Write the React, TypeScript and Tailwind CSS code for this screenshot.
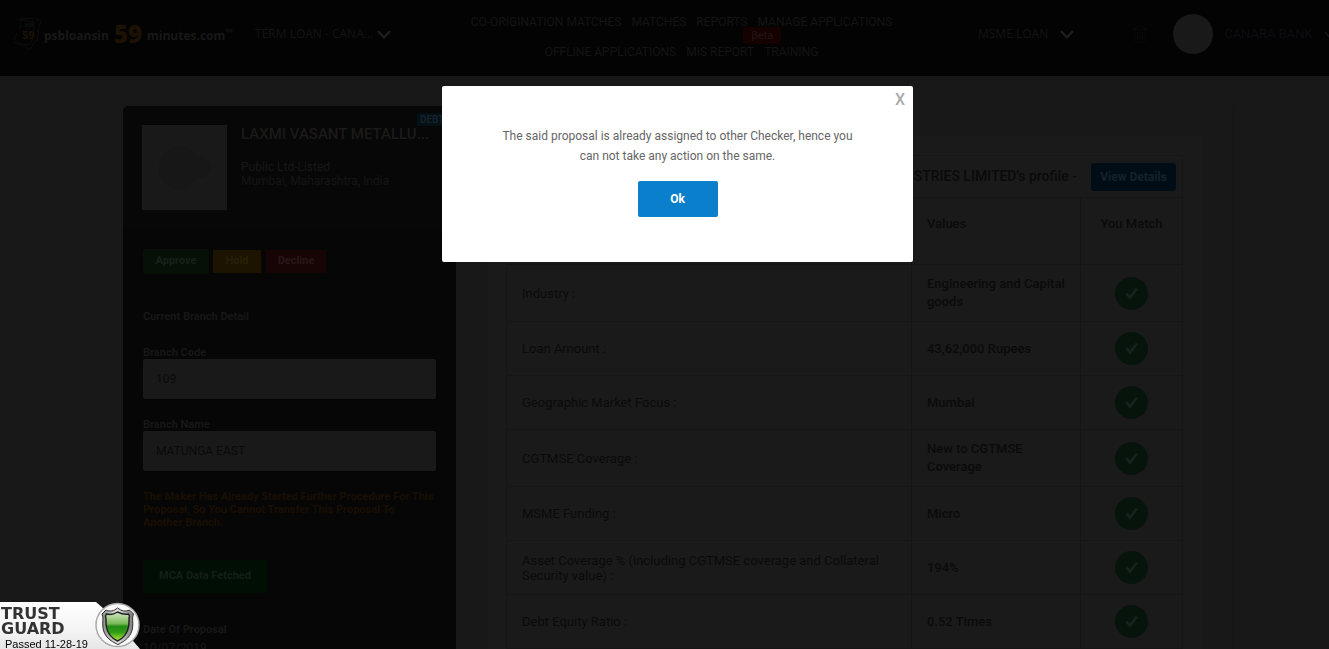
import React from 'react';

type Match = { label: string; value: string; height: string };

const matches: Match[] = [
  { label: 'Industry :', value: 'Engineering and Capital goods', height: 'h-[57px]' },
  { label: 'Loan Amount :', value: '43,62,000 Rupees', height: 'h-[54px]' },
  { label: 'Geographic Market Focus :', value: 'Mumbai', height: 'h-[54px]' },
  { label: 'CGTMSE Coverage :', value: 'New to CGTMSE Coverage', height: 'h-[57px]' },
  { label: 'MSME Funding :', value: 'Micro', height: 'h-[54px]' },
  {
    label: 'Asset Coverage % (including CGTMSE coverage and Collateral Security value) :',
    value: '194%',
    height: 'h-[54px]',
  },
  { label: 'Debt Equity Ratio :', value: '0.52 Times', height: 'h-[54px]' },
];

function Chevron() {
  return (
    <svg width="14" height="9" viewBox="0 0 14 9" fill="none" stroke="#202020" strokeWidth="2" className="shrink-0">
      <path d="M1 1l6 6.5L13 1" />
    </svg>
  );
}

function LogoMark() {
  return (
    <svg width="32" height="36" viewBox="0 0 32 36" fill="none" className="shrink-0">
      <g stroke="#0a0d0b" strokeWidth="1">
        <path d="M7 2h16l6 3-4 11M5 4l15-2 2 12" />
        <path d="M8 13l1-9 13 2v9" />
        <path d="M2 24l3-7M2 26l16 7 6-9M4 27l13 2 4-6" />
        <path d="M27 13l-2 12" />
      </g>
      <rect x="13" y="7" width="9" height="4" fill="#080b09" />
      <text x="10" y="23" fontSize="11" fontWeight="700" fontFamily="Open Sans, sans-serif" fill="#1b1004">59</text>
    </svg>
  );
}

function Header() {
  return (
    <header className="flex h-[76px] bg-[#030303] text-[12px] text-[#141414]">
      <div className="flex w-[442px] shrink-0 items-center pb-2 pl-3 font-['Open_Sans',sans-serif]">
        <LogoMark />
        <a href="#home" className="flex items-center pt-1 font-bold text-[#181818]">
          <span className="text-[12px]">psbloansin</span>
          <span className="px-[5px] pb-1 text-[24px] leading-6 font-extrabold text-[#1c1103]">59</span>
          <span className="text-[12px]">minutes.com</span>
          <span className="pb-2 text-[10px]">™</span>
        </a>
        <button className="ml-[22px] flex items-center gap-1 text-[12px]">
          TERM LOAN - CANA...
          <Chevron />
        </button>
      </div>
      <nav className="flex w-[479px] shrink-0 flex-col items-center pt-[7px] leading-[30px]">
        <div className="flex gap-[10px]">
          <a href="#co-origination">CO-ORIGINATION MATCHES</a>
          <a href="#matches">MATCHES</a>
          <a href="#reports">REPORTS</a>
          <a href="#manage">MANAGE APPLICATIONS</a>
        </div>
        <div className="flex gap-[10px]">
          <a href="#offline">OFFLINE APPLICATIONS</a>
          <a href="#mis" className="relative">
            MIS REPORT
            <span className="absolute -top-[10px] left-[57px] rounded-[3px] bg-[#160101] px-2 text-[11px] leading-[17px] text-[#221616]">
              βeta
            </span>
          </a>
          <a href="#training">TRAINING</a>
        </div>
      </nav>
      <div className="flex shrink-0 items-center pb-2 pl-[57px]">
        <button className="flex items-center gap-3 font-['Open_Sans',sans-serif]">
          MSME LOAN
          <Chevron />
        </button>
        <button aria-label="Notifications" className="ml-[59px]">
          <svg width="14" height="18" viewBox="0 0 14 18" fill="none" stroke="#090909">
            <path d="M1 5V4l4-2V1h4v1l4 2v1zM2 8h10v9H2zM4.500 10v5M7 10v5M9.500 10v5" />
          </svg>
        </button>
        <div className="ml-[26px] h-10 w-10 rounded-full bg-[#191919]" />
        <button className="ml-[11px] flex items-center gap-[11px] text-[13px] whitespace-nowrap text-[#0c0d11]">
          CANARA BANK
          <svg width="10" height="7" viewBox="0 0 10 7" fill="none" stroke="#141418" strokeWidth="1.500" className="shrink-0">
            <path d="M1 1l4 4.500L9 1" />
          </svg>
        </button>
      </div>
    </header>
  );
}

function Sidebar() {
  return (
    <aside className="w-[333px] shrink-0 rounded-tl-md bg-[#060606] text-[11px] font-bold text-[#171717]">
      <div className="relative flex h-[124px] gap-[14px] rounded-tl-md border-b border-[#060606] bg-[#070707] pt-[19px] pl-[19px]">
        <div className="flex h-[85px] w-[85px] shrink-0 items-center justify-center bg-[#191919]">
          <svg width="54" height="44" viewBox="0 0 54 44">
            <path d="M22 1C34 1 35 8 42 10c8 2 12 8 11 13s-7 9-15 10c-5 6-9 10-17 10C9 43 1 33 1 22S10 1 22 1z" fill="#171717" />
          </svg>
        </div>
        <div className="min-w-0">
          <h2 className="truncate text-[15px] leading-[18px] font-medium text-[#1b1a19]">LAXMI VASANT METALLU...</h2>
          <p className="pt-[17px] text-[12px] leading-[14px] font-normal">
            Public Ltd-Listed
            <br />
            <span className="text-[#151515]">Mumbai, Maharashtra, India</span>
          </p>
        </div>
        <span className="absolute top-[7px] right-0 w-[39px] bg-[#051016] px-[3px] text-[10px] leading-[13px] text-[#14222a]">
          DEBT
        </span>
      </div>
      <div className="flex flex-col px-5 pt-[19px]">
        <div className="flex items-center gap-1">
          <button className="h-[25px] w-[66px] rounded-xs bg-[#071007] text-[#182018]">Approve</button>
          <button className="h-[23px] w-12 bg-[#1d1400] text-[#272008]">Hold</button>
          <button className="ml-px h-[23px] w-[60px] bg-[#170505] text-[#271818]">Decline</button>
        </div>
        <h3 className="pt-[35px] leading-[16px]">Current Branch Detail</h3>
        <label htmlFor="branch-code" className="pt-[21px] leading-[13px]">Branch Code</label>
        <input
          id="branch-code"
          defaultValue="109"
          className="h-10 w-full rounded-xs bg-[#191919] px-[13px] text-[12px] font-normal text-[#0a0a0a]"
        />
        <label htmlFor="branch-name" className="pt-[19px] leading-[13px]">Branch Name</label>
        <input
          id="branch-name"
          defaultValue="MATUNGA EAST"
          className="h-10 w-full rounded-xs bg-[#191919] px-[13px] text-[12px] font-normal text-[#0a0a0a]"
        />
        <p className="pt-[19px] leading-[13px] text-[#1a0e03]">
          The Maker Has Already Started Further Procedure For This Proposal, So You Cannot Transfer This Proposal To
          Another Branch.
        </p>
        <button className="mt-[31px] h-[33px] self-start bg-[#000e04] px-4 text-[#151e17]">MCA Data Fetched</button>
        <h3 className="pt-[29px] leading-[16px]">Date Of Proposal</h3>
        <p className="pt-[2px] text-[12px] leading-[16px] font-normal">10/07/2019</p>
      </div>
    </aside>
  );
}

function MatchTable() {
  return (
    <table className="w-full table-fixed border-collapse border border-[#161616] text-[13px] text-[#0a0a0a]">
      <colgroup>
        <col />
        <col className="w-[169px]" />
        <col className="w-[102px]" />
      </colgroup>
      <thead>
        <tr className="h-[42px] border-b border-[#151515]">
          <th colSpan={3} className="font-medium">
            <div className="flex items-center justify-end gap-[14px] pr-[6px] text-[14px]">
              LAXMI VASANT METALLURGICAL INDUSTRIES LIMITED's profile -
              <button className="h-7 w-[85px] rounded-[3px] bg-[#000d17] text-[12px] font-bold text-[#172129]">
                View Details
              </button>
            </div>
          </th>
        </tr>
        <tr className="h-[67px] border-b border-[#151515] text-left">
          <th className="border-r border-[#151515] px-[15px] pb-[14px] font-medium">Parameters</th>
          <th className="border-r border-[#151515] px-[15px] pb-[14px] font-medium">Values</th>
          <th className="pb-[14px] text-center font-medium">You Match</th>
        </tr>
      </thead>
      <tbody>
        {matches.map((m) => (
          <tr key={m.label} className={`${m.height} border-b border-[#161616]`}>
            <td className="border-r border-[#151515] px-[15px] leading-[15px]">{m.label}</td>
            <td className="border-r border-[#151515] px-[15px] leading-[18px] font-medium">{m.value}</td>
            <td>
              <svg width="33" height="33" viewBox="0 0 33 33" className="mx-auto" role="img" aria-label="Matched">
                <circle cx="16.500" cy="16.500" r="16.500" fill="#07140c" />
                <path d="M11.500 16.500l3.500 4 7-9" fill="none" stroke="#18211c" strokeWidth="2.800" />
              </svg>
            </td>
          </tr>
        ))}
      </tbody>
    </table>
  );
}

function Dialog() {
  return (
    <div className="fixed inset-0 flex items-start justify-center pt-[86px] pl-[26px]">
      <div
        role="dialog"
        aria-modal="true"
        className="relative flex h-[176px] w-[471px] flex-col items-center rounded-[2px] bg-white px-[50px] pt-10 text-center"
      >
        <button aria-label="Close" className="absolute top-1 right-2 text-[16px] leading-5 font-medium text-[#aaaaaa]">
          X
        </button>
        <p className="text-[12px] leading-5 text-[#666666]">
          The said proposal is already assigned to other Checker, hence you can not take any action on the same.
        </p>
        <button className="mt-[15px] h-9 w-20 rounded-xs bg-[#0a80cc] text-[12px] font-bold text-white">Ok</button>
      </div>
    </div>
  );
}

function TrustBadge() {
  return (
    <a href="#trust-guard" className="fixed bottom-0 left-0 h-[47px] w-[140px] text-[#333333]">
      <svg width="140" height="47" viewBox="0 0 140 47" className="absolute inset-0">
        <defs>
          <linearGradient id="plate" x1="0" y1="0" x2="0" y2="1">
            <stop offset="0" stopColor="#ffffff" />
            <stop offset="0.600" stopColor="#f4f4f4" />
            <stop offset="1" stopColor="#e6e6e6" />
          </linearGradient>
          <linearGradient id="shield" x1="0" y1="0" x2="0" y2="1">
            <stop offset="0" stopColor="#d5e8cc" />
            <stop offset="0.400" stopColor="#79b956" />
            <stop offset="0.500" stopColor="#238b13" />
            <stop offset="0.700" stopColor="#319c16" />
            <stop offset="1" stopColor="#b4ec3a" />
          </linearGradient>
          <linearGradient id="steel" x1="0" y1="0" x2="1" y2="0">
            <stop offset="0" stopColor="#888888" />
            <stop offset="0.500" stopColor="#e5e5e5" />
            <stop offset="1" stopColor="#777777" />
          </linearGradient>
        </defs>
        <path d="M0 0h96l8 7 30 33 6 7H0z" fill="url(#plate)" />
        <circle cx="117.500" cy="23" r="21.500" fill="#fafafa" stroke="#aaaaaa" strokeWidth="1.500" />
        <path
          d="M117.500 6c4 3 8 4 12 2l4 4c-2 4 0 8-1 14-1 8-7 13-14.500 16.500C110 39 104 34 103 26c-1-6 1-10-1-14l4-4c4 2 8 1 11.500-2z"
          fill="url(#steel)"
          stroke="#333333"
        />
        <path
          d="M117.500 10c4 2 7 3 11 2l1 2c-1 3 0 7-1 11-1 7-5 11-11 14-6-3-10-7-11-14-1-4 0-8-1-11l1-2c4 1 8 0 11-2z"
          fill="url(#shield)"
          stroke="#222222"
          strokeWidth="1.500"
        />
      </svg>
      <span className="relative flex flex-col pt-1 pl-px font-['DejaVu_Sans',sans-serif] text-[16px] leading-[15px] font-bold">
        <span>TRUST</span>
        <span>GUARD</span>
      </span>
      <span className="relative block pt-px pl-[5px] font-['Liberation_Sans',sans-serif] text-[11px] leading-[14px] whitespace-nowrap text-black">
        Passed 11-28-19
      </span>
    </a>
  );
}

export default function App() {
  return (
    <div className="h-screen overflow-hidden bg-[#181818] font-[Roboto,sans-serif]">
      <Header />
      <main className="mt-[30px] mr-[95px] ml-[123px] flex">
        <Sidebar />
        <section className="min-w-0 flex-1 border-r border-[#151515] px-[30px] pt-[30px]">
          <div className="bg-[#1a1a1a] px-5 pt-[19px] pb-5">
            <MatchTable />
          </div>
        </section>
      </main>
      <Dialog />
      <TrustBadge />
    </div>
  );
}
